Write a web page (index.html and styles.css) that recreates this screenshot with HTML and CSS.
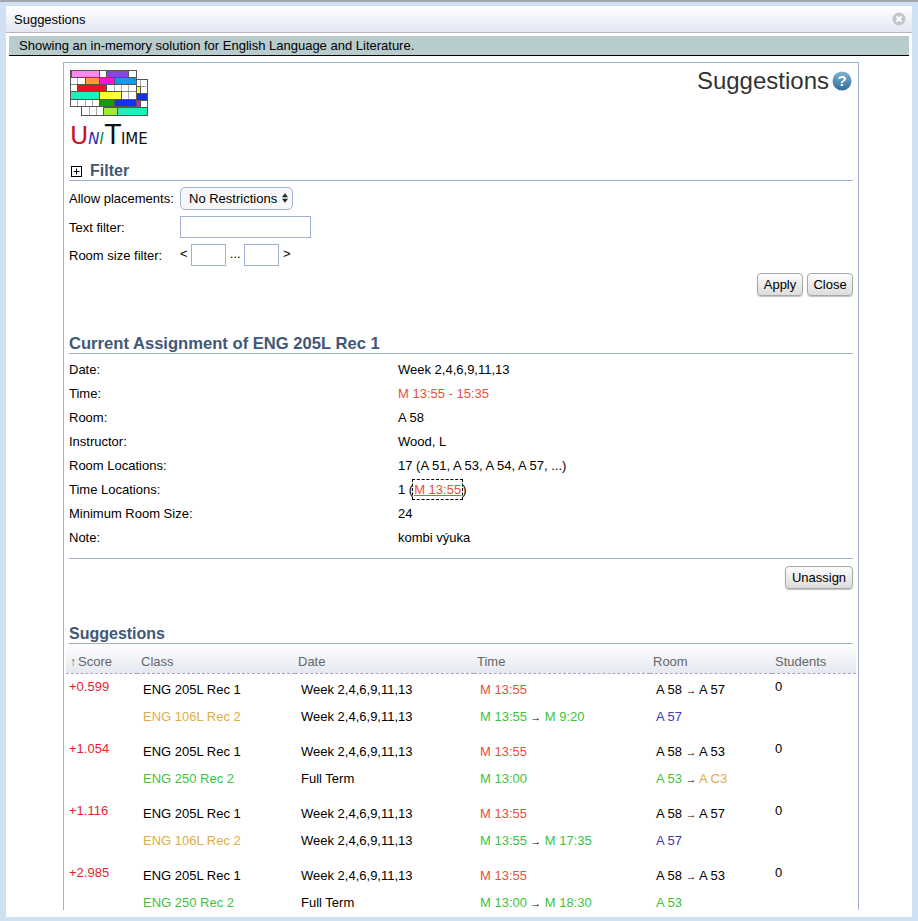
FILE: index.html
```html
<!DOCTYPE html>
<html lang="en">
<head>
    <meta charset="UTF-8">
    <title>Suggestions</title>
    <link rel="stylesheet" href="styles.css">
</head>
<body>
<div class="dialog">
    <div class="dialog-title">
        <span>Suggestions</span>
        <svg class="close-icon" width="14" height="14" viewBox="0 0 14 14">
            <circle cx="7" cy="7" r="6.5" fill="#c2c5c9"/>
            <path d="M4.5 4.5 L9.5 9.5 M9.5 4.5 L4.5 9.5" stroke="#fff" stroke-width="2"/>
        </svg>
    </div>
    <div class="dialog-body">
        <div class="banner">Showing an in-memory solution for English Language and Literature.</div>
        <div class="panel">
            <div class="top">
                <div class="logo">
                    <svg width="80" height="47" viewBox="0 0 80 47">
                        <!-- back sheet -->
                        <rect x="11.500" y="9.500" width="66" height="36" fill="#fff" stroke="#555"/>
                        <path d="M70.500 10V38M67 16.500H78M67 23.500H78M67 30.500H78" stroke="#aaa"/>
                        <g stroke="#555">
                            <rect x="66.500" y="16.500" width="4" height="7" fill="#ffff33"/>
                            <rect x="66.500" y="23.500" width="11" height="7" fill="#1133ee"/>
                            <rect x="66.500" y="30.500" width="4" height="7" fill="#ee11cc"/>
                        </g>
                        <path d="M19.500 37V45M26.500 37V45" stroke="#aaa"/>
                        <g stroke="#555">
                            <rect x="33.500" y="37.500" width="14" height="8" fill="#99ee33"/>
                            <rect x="47.500" y="37.500" width="30" height="8" fill="#22eebb"/>
                        </g>
                        <!-- front sheet -->
                        <rect x="0.500" y="0.500" width="66" height="36" fill="#fff" stroke="#555"/>
                        <path d="M7.500 8V36M15.500 8V36M22.500 8V36M29.500 0V36M36.500 0V36M44.500 8V36M51.500 8V36M58.500 0V36" stroke="#aaa"/>
                        <path d="M1 7.500H66M1 14.500H66M1 21.500H66M1 29.500H66" stroke="#888"/>
                        <g stroke="#555">
                            <rect x="1.500" y="0.500" width="28" height="7" fill="#ff88ee"/>
                            <rect x="36.500" y="0.500" width="22" height="7" fill="#8844dd"/>
                            <rect x="15.500" y="7.500" width="14" height="7" fill="#ff9933"/>
                            <rect x="29.500" y="7.500" width="15" height="7" fill="#ff11dd"/>
                            <rect x="44.500" y="7.500" width="22" height="7" fill="#1199ee"/>
                            <rect x="7.500" y="14.500" width="29" height="7" fill="#ee1122"/>
                            <rect x="0.500" y="21.500" width="29" height="8" fill="#22eebb"/>
                            <rect x="29.500" y="21.500" width="22" height="8" fill="#ffff33"/>
                            <rect x="29.500" y="29.500" width="15" height="7" fill="#119922"/>
                            <rect x="44.500" y="29.500" width="22" height="7" fill="#1133ee"/>
                        </g>
                    </svg>
                    <div class="logo-text"><span class="l-u">U</span><span class="l-n">N</span><span class="l-i">I</span><span class="l-t">T</span><span class="l-r">IME</span></div>
                </div>
                <div class="page-title">
                    <span>Suggestions</span>
                    <svg width="20" height="22" viewBox="0 0 20 22">
                        <defs>
                            <linearGradient id="helpBg" x1="0" y1="0" x2="0" y2="1">
                                <stop offset="0" stop-color="#7fb2d0"/>
                                <stop offset="1" stop-color="#2d6f9c"/>
                            </linearGradient>
                        </defs>
                        <circle cx="10" cy="11" r="9.500" fill="url(#helpBg)"/>
                        <text x="10" y="16" class="help-mark" text-anchor="middle">?</text>
                    </svg>
                </div>
            </div>

            <div class="section-head filter-head">
                <svg class="plus" width="11" height="11" viewBox="0 0 11 11">
                    <rect x="0.500" y="0.500" width="10" height="10" fill="#fff" stroke="#000"/>
                    <path d="M2.500 5.500H8.500M5.500 2.500V8.500" stroke="#000"/>
                </svg>
                Filter
            </div>
            <div class="filter-row first">
                <label>Allow placements:</label>
                <div class="select-wrap">
                    <select><option>No Restrictions</option></select>
                    <svg class="select-arrows" width="6" height="10" viewBox="0 0 7 11">
                        <path d="M0 4.500L3.500 0L7 4.500ZM0 6.500L3.500 11L7 6.500Z" fill="#222"/>
                    </svg>
                </div>
            </div>
            <div class="filter-row">
                <label>Text filter:</label>
                <input class="text-input" type="text">
            </div>
            <div class="filter-row">
                <label>Room size filter:</label>
                <span class="range">&lt; <input class="small-input" type="text"> ... <input class="small-input" type="text"> &gt;</span>
            </div>
            <div class="buttons filter-buttons">
                <button class="apply">Apply</button>
                <button class="close">Close</button>
            </div>

            <div class="section-head assign-head">Current Assignment of ENG 205L Rec 1</div>
            <div class="props">
                <div>Date:</div><div>Week 2,4,6,9,11,13</div>
                <div>Time:</div><div class="c-time">M 13:55 - 15:35</div>
                <div>Room:</div><div>A 58</div>
                <div>Instructor:</div><div>Wood, L</div>
                <div>Room Locations:</div><div>17 (A 51, A 53, A 54, A 57, ...)</div>
                <div>Time Locations:</div><div>1 (<a class="time-link">M 13:55</a>)</div>
                <div>Minimum Room Size:</div><div>24</div>
                <div>Note:</div><div>kombi výuka</div>
            </div>
            <div class="buttons unassign-bar">
                <button class="unassign">Unassign</button>
            </div>

            <div class="section-head sugg-head">Suggestions</div>
            <table class="results">
                <colgroup>
                    <col class="w-score"><col class="w-class"><col class="w-date"><col class="w-time"><col class="w-room"><col>
                </colgroup>
                <thead>
                    <tr>
                        <th><span class="sort">↑</span>Score</th>
                        <th>Class</th>
                        <th>Date</th>
                        <th>Time</th>
                        <th>Room</th>
                        <th>Students</th>
                    </tr>
                </thead>
                <tbody>
                    <tr>
                        <td class="score" rowspan="2">+0.599</td>
                        <td>ENG 205L Rec 1</td>
                        <td>Week 2,4,6,9,11,13</td>
                        <td class="c-time">M 13:55</td>
                        <td>A 58 <i class="arr">→</i> A 57</td>
                        <td class="students" rowspan="2">0</td>
                    </tr>
                    <tr class="last">
                        <td class="c-orange">ENG 106L Rec 2</td>
                        <td>Week 2,4,6,9,11,13</td>
                        <td class="c-green">M 13:55 <i class="arr">→</i> M 9:20</td>
                        <td class="c-blue">A 57</td>
                    </tr>
                    <tr>
                        <td class="score" rowspan="2">+1.054</td>
                        <td>ENG 205L Rec 1</td>
                        <td>Week 2,4,6,9,11,13</td>
                        <td class="c-time">M 13:55</td>
                        <td>A 58 <i class="arr">→</i> A 53</td>
                        <td class="students" rowspan="2">0</td>
                    </tr>
                    <tr class="last">
                        <td class="c-green">ENG 250 Rec 2</td>
                        <td>Full Term</td>
                        <td class="c-green">M 13:00</td>
                        <td class="c-green">A 53 <i class="arr">→</i> <span class="c-orange">A C3</span></td>
                    </tr>
                    <tr>
                        <td class="score" rowspan="2">+1.116</td>
                        <td>ENG 205L Rec 1</td>
                        <td>Week 2,4,6,9,11,13</td>
                        <td class="c-time">M 13:55</td>
                        <td>A 58 <i class="arr">→</i> A 57</td>
                        <td class="students" rowspan="2">0</td>
                    </tr>
                    <tr class="last">
                        <td class="c-orange">ENG 106L Rec 2</td>
                        <td>Week 2,4,6,9,11,13</td>
                        <td class="c-green">M 13:55 <i class="arr">→</i> M 17:35</td>
                        <td class="c-blue">A 57</td>
                    </tr>
                    <tr>
                        <td class="score" rowspan="2">+2.985</td>
                        <td>ENG 205L Rec 1</td>
                        <td>Week 2,4,6,9,11,13</td>
                        <td class="c-time">M 13:55</td>
                        <td>A 58 <i class="arr">→</i> A 53</td>
                        <td class="students" rowspan="2">0</td>
                    </tr>
                    <tr class="last">
                        <td class="c-green">ENG 250 Rec 2</td>
                        <td>Full Term</td>
                        <td class="c-green">M 13:00 <i class="arr">→</i> M 18:30</td>
                        <td class="c-green">A 53</td>
                    </tr>
                </tbody>
            </table>
        </div>
    </div>
</div>
</body>
</html>
```

FILE: styles.css
```css
html, body {
    margin: 0;
    padding: 0;
    height: 921px;
    overflow: hidden;
}
body {
    background-color: #a3a6ac;
    font-family: "Liberation Sans", Arial, sans-serif;
    font-size: 13px;
    color: #000;
}
.dialog {
    box-sizing: border-box;
    width: 918px;
    height: 919px;
    margin-top: 2px;
    border: solid #cfe0f2;
    border-width: 4px 6px;
    background-color: #fff;
    display: flex;
    flex-direction: column;
}
.dialog-title {
    flex: none;
    box-sizing: border-box;
    height: 27px;
    padding: 0 6px 0 8px;
    display: flex;
    align-items: center;
    justify-content: space-between;
    background: linear-gradient(to bottom, #ffffff, #e2e6f1);
    border-bottom: 1px solid #b5b8c2;
}
.dialog-body {
    flex: 1;
    height: 0;
    overflow: hidden;
    padding: 3px 3px 0 3px;
}
.banner {
    box-sizing: border-box;
    height: 20px;
    line-height: 19px;
    padding-left: 10px;
    background-color: #b9cccd;
    border-bottom: 1px solid #000;
}
.panel {
    box-sizing: border-box;
    width: 796px;
    height: 848px;
    margin: 6px 0 0 54px;
    border: 1px solid #9fb0d0;
    border-bottom: none;
    padding: 0 5px;
    overflow: hidden;
}
.top {
    display: flex;
    justify-content: space-between;
    height: 100px;
}
.logo {
    padding: 7px 0 0 1px;
}
.logo svg {
    display: block;
}
.logo-text {
    margin-top: 5px;
    font-family: "DejaVu Sans", sans-serif;
    line-height: 26px;
    height: 26px;
    white-space: nowrap;
    font-size: 13px;
}
.l-u { font-size: 25px; color: #c8141e; }
.l-n { color: #1c2fc0; font-style: italic; font-size: 15px; }
.l-i { color: #1b8a2a; font-style: italic; font-size: 15px; margin-right: 1px; }
.l-t { font-size: 26px; color: #111; }
.l-r { font-size: 15px; color: #111; }
.page-title {
    display: flex;
    align-items: flex-start;
    gap: 3px;
    font-size: 24px;
    color: #333;
    padding: 4px 1px 0 0;
    line-height: 28px;
}
.page-title svg {
    margin-top: 3px;
}
.help-mark {
    font-family: "Liberation Sans", Arial, sans-serif;
    font-size: 15px;
    font-weight: bold;
    fill: #fff;
}
.section-head {
    font-size: 16px;
    font-weight: bold;
    color: #3f5877;
    border-bottom: 1px solid #9fb0d0;
    line-height: 22px;
    box-sizing: border-box;
}
.filter-head {
    display: flex;
    align-items: center;
    height: 18px;
    padding: 0 0 1px 2px;
    line-height: 18px;
}
.plus {
    margin-right: 8px;
}
.filter-row {
    display: flex;
    align-items: center;
    height: 22px;
    margin-top: 6px;
}
.filter-row.first {
    height: 23px;
}
.filter-row label {
    width: 111px;
    flex: none;
}
.select-wrap {
    position: relative;
    display: inline-block;
}
select {
    appearance: none;
    -webkit-appearance: none;
    box-sizing: border-box;
    width: 113px;
    height: 23px;
    padding: 0 0 0 8px;
    border: 1px solid #9fb0d0;
    border-radius: 5px;
    background: #f7f7f7;
    font-family: "Liberation Sans", Arial, sans-serif;
    font-size: 13px;
    color: #000;
}
.select-arrows {
    position: absolute;
    right: 5px;
    top: 6px;
}
input {
    box-sizing: border-box;
    height: 22px;
    border: 1px solid #9fb0d0;
    background: #fff;
    padding: 0;
    margin: 0;
}
.text-input {
    width: 131px;
}
.small-input {
    width: 35px;
    vertical-align: middle;
}
.buttons {
    display: flex;
    justify-content: flex-end;
    gap: 4px;
}
button {
    box-sizing: border-box;
    height: 23px;
    padding: 0;
    border: 1px solid #a8a8a8;
    border-radius: 4px;
    background: linear-gradient(to bottom, #fdfdfd, #dcdcdc);
    box-shadow: 0 1px 1px rgba(0, 0, 0, 0.25);
    font-family: "Liberation Sans", Arial, sans-serif;
    font-size: 13px;
    color: #000;
}
.apply, .close {
    width: 46px;
}
.unassign {
    width: 68px;
}
.filter-buttons {
    margin-top: 7px;
}
.assign-head {
    margin-top: 37px;
    height: 21px;
    font-size: 16.600px;
}
.props {
    display: grid;
    grid-template-columns: 329px 1fr;
    grid-auto-rows: 24px;
    line-height: 24px;
    margin-top: 4px;
}
.c-time { color: #e9503c; }
.c-green { color: #3cc43c; }
.c-orange { color: #e0ac45; }
.c-blue { color: #3a3ab8; }
.time-link {
    color: #e9503c;
    text-decoration: underline;
    outline: 1px dashed #000;
    padding: 2px 1px;
}
.unassign-bar {
    margin-top: 8px;
    border-top: 1px solid #9fb0d0;
    padding-top: 7px;
}
.sugg-head {
    margin-top: 34px;
    height: 21px;
}
.results {
    table-layout: fixed;
    border-collapse: separate;
    border-spacing: 0;
    width: 790px;
    margin-left: -3px;
}
.w-score { width: 71px; }
.w-class { width: 158px; }
.w-date { width: 179px; }
.w-time { width: 176px; }
.w-room { width: 122px; }
.results th {
    box-sizing: border-box;
    height: 30px;
    padding: 5px 0 0 3px;
    text-align: left;
    font-weight: normal;
    color: #666;
    background: linear-gradient(to bottom, #ffffff, #e5e8f1);
    border-bottom: 1px dashed #9fa8c0;
}
.results th:nth-child(1) { padding-left: 4px; }
.results th:nth-child(2) { padding-left: 4px; }
.sort {
    font-size: 12px;
    margin-right: 2px;
}
.results td {
    box-sizing: border-box;
    height: 27px;
    padding: 4px 0 0 6px;
    white-space: nowrap;
    vertical-align: middle;
}
.results tr.last td {
    height: 35px;
    padding-bottom: 8px;
}
.results td.score {
    color: #f01a2c;
    vertical-align: top;
    padding: 5px 0 0 3px;
}
.results td.students {
    vertical-align: top;
    padding: 5px 0 0 3px;
}
.arr {
    font-style: normal;
    color: #000;
    font-size: 10.500px;
}
```
